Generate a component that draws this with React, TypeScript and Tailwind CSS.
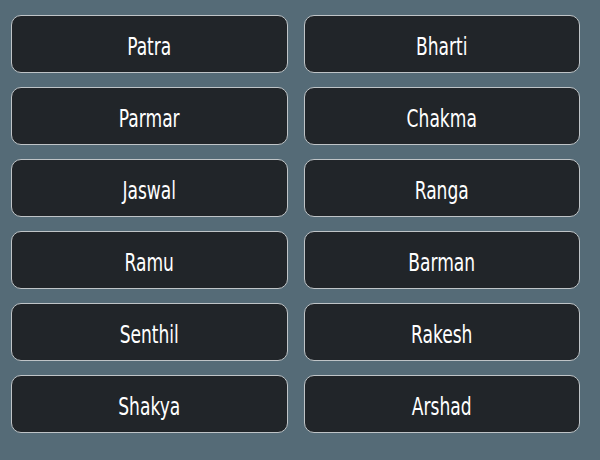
const NAMES = [
  "Patra",
  "Bharti",
  "Parmar",
  "Chakma",
  "Jaswal",
  "Ranga",
  "Ramu",
  "Barman",
  "Senthil",
  "Rakesh",
  "Shakya",
  "Arshad",
];

export default function App() {
  return (
    <div className="h-[460px] w-[600px] bg-[#556b77] pl-[11px] pr-[20px] pt-[15px]">
      <div className="grid grid-cols-2 gap-x-4 gap-y-[14px]">
        {NAMES.map((n) => (
          <button
            key={n}
            className="flex h-[58px] items-center justify-center rounded-[10px] border border-[#bfc4c7] bg-[#212529] text-white"
          >
            {/* condensed, tall face: squeeze by scaling the text vertically */}
            <span
              className="inline-block translate-y-[2px] scale-y-[1.3] text-[19px] leading-none"
              style={{ fontFamily: '"DejaVu Sans Condensed", "DejaVu Sans", sans-serif' }}
            >
              {n}
            </span>
          </button>
        ))}
      </div>
    </div>
  );
}
